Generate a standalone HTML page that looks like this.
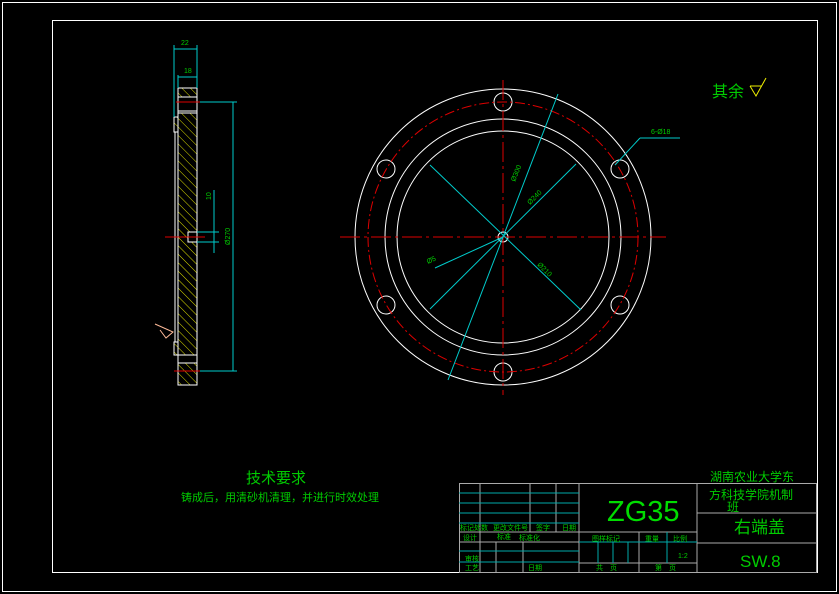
<!DOCTYPE html>
<html><head><meta charset="utf-8"><style>
html,body{margin:0;padding:0;background:#000;width:839px;height:594px;overflow:hidden}
svg{display:block}
text{font-family:"Liberation Sans","Noto Sans CJK SC",sans-serif}
</style></head><body>
<svg width="839" height="594" viewBox="0 0 839 594">
<defs><pattern id="h" width="6" height="6" patternUnits="userSpaceOnUse" patternTransform="rotate(-45)"><line x1="0" y1="0" x2="0" y2="6" stroke="#dd0" stroke-width="1"/></pattern></defs>
<rect x="2.5" y="2.5" width="834" height="589" fill="none" stroke="#fff"/>
<rect x="52.5" y="20.5" width="765" height="552" fill="none" stroke="#fff"/>
<!-- side view -->
<g stroke="#fff" fill="none" stroke-width="1">
<rect x="178" y="113" width="19" height="242" fill="url(#h)"/>
<rect x="174" y="117" width="4" height="15" fill="url(#h)"/>
<rect x="174" y="342" width="4" height="13" fill="url(#h)"/>
<rect x="178" y="88" width="19" height="9" fill="url(#h)"/>
<rect x="178" y="363" width="19" height="22" fill="url(#h)"/>
<line x1="174" y1="45" x2="174" y2="117"/>
<line x1="175" y1="132" x2="175" y2="342"/>
<line x1="178" y1="97" x2="178" y2="113"/>
<line x1="178" y1="97" x2="197" y2="97"/>
<line x1="178" y1="111" x2="197" y2="111"/>
<line x1="178" y1="355" x2="178" y2="363"/>
<line x1="197" y1="88" x2="197" y2="385"/>
<rect x="188" y="232" width="9" height="10" fill="#000"/>
</g>
<g stroke="#0cc" stroke-width="1" fill="none">
<line x1="174" y1="45" x2="174" y2="117"/><line x1="197" y1="45" x2="197" y2="88"/>
<line x1="174" y1="49" x2="197" y2="49"/>
<line x1="178" y1="75" x2="178" y2="88"/><line x1="178" y1="77" x2="197" y2="77"/>
<line x1="197" y1="102" x2="237" y2="102"/><line x1="197" y1="371" x2="237" y2="371"/>
<line x1="233" y1="102" x2="233" y2="371"/>
<line x1="214" y1="190" x2="214" y2="253"/>
<line x1="197" y1="232" x2="219" y2="232"/><line x1="197" y1="242" x2="219" y2="242"/>
</g>
<g stroke="#d00" stroke-width="1"><line x1="165" y1="237" x2="205" y2="237"/><line x1="176" y1="102" x2="200" y2="102"/><line x1="174" y1="371" x2="200" y2="371"/></g>
<polyline points="155,324 173,332 166,338 160,330" fill="none" stroke="#fb9"/>
<g fill="#0c0" font-size="7">
<text x="181" y="45">22</text><text x="184" y="73">18</text>
<text x="211" y="200" transform="rotate(-90 211 200)">10</text>
<text x="230" y="245" transform="rotate(-90 230 245)">Ø270</text>
</g>
<!-- front view -->
<g fill="none" stroke="#fff">
<circle cx="503" cy="237" r="148"/>
<circle cx="503" cy="237" r="118"/>
<circle cx="503" cy="237" r="106"/>
<circle cx="503" cy="237" r="5"/>
<circle cx="503" cy="102" r="9"/><circle cx="620" cy="169" r="9"/><circle cx="620" cy="305" r="9"/>
<circle cx="503" cy="372" r="9"/><circle cx="386" cy="305" r="9"/><circle cx="386" cy="169" r="9"/>
</g>
<circle cx="503" cy="237" r="135" fill="none" stroke="#d00" stroke-dasharray="10,3,2,3"/>
<g stroke="#d00"><line x1="340" y1="237" x2="666" y2="237" stroke-dasharray="20,4,3,4"/><line x1="503" y1="80" x2="503" y2="395" stroke-dasharray="20,4,3,4"/></g>
<g stroke="#0cc" fill="none">
<line x1="448" y1="380" x2="558" y2="94"/>
<line x1="430" y1="165" x2="581" y2="310"/>
<line x1="576" y1="164" x2="430" y2="309"/>
<line x1="435" y1="268" x2="503" y2="237"/>
<line x1="615" y1="165" x2="640" y2="138"/><line x1="640" y1="138" x2="680" y2="138"/>
</g>
<g fill="#0c0" font-size="7">
<text x="515" y="182" transform="rotate(-68 515 182)">Ø300</text>
<text x="530" y="205" transform="rotate(-45 530 205)">Ø240</text>
<text x="537" y="265" transform="rotate(45 537 265)">Ø210</text>
<text x="428" y="264" transform="rotate(-25 428 264)">Ø5</text>
<text x="651" y="134">6-Ø18</text>
</g>
<text x="712" y="97" fill="#0c0" font-size="16">其余</text>
<polyline points="750,86 756,96 766,78" fill="none" stroke="#ee0"/>
<line x1="750" y1="86" x2="762" y2="86" stroke="#ee0"/>
<!-- tech reqs -->
<text x="246" y="483" fill="#0c0" font-size="15">技术要求</text>
<text x="181" y="501" fill="#0c0" font-size="11">铸成后，用清砂机清理，并进行时效处理</text>
<!-- title block -->
<g stroke="#aaa" fill="none">
<rect x="459.5" y="483.5" width="357" height="89"/>
<line x1="459" y1="532" x2="579" y2="532"/>
<line x1="579" y1="483" x2="579" y2="572"/>
<line x1="697" y1="483" x2="697" y2="572"/>
<line x1="697" y1="513" x2="817" y2="513"/>
<line x1="697" y1="543" x2="817" y2="543"/>
<line x1="579" y1="532" x2="697" y2="532"/>
<line x1="579" y1="563" x2="697" y2="563"/>
<line x1="639" y1="532" x2="639" y2="572"/>
<line x1="459" y1="542" x2="579" y2="542"/>
<line x1="480" y1="483" x2="480" y2="572"/>
<line x1="496" y1="542" x2="496" y2="572"/>
<line x1="523" y1="542" x2="523" y2="572"/>
<line x1="530" y1="483" x2="530" y2="532"/>
<line x1="556" y1="483" x2="556" y2="532"/>
</g>
<g stroke="#0aa" fill="none">
<line x1="459" y1="493" x2="579" y2="493"/><line x1="459" y1="503" x2="579" y2="503"/><line x1="459" y1="513" x2="579" y2="513"/><line x1="459" y1="523" x2="579" y2="523"/>
<line x1="459" y1="551" x2="579" y2="551"/><line x1="459" y1="562" x2="579" y2="562"/>
<line x1="579" y1="542" x2="697" y2="542"/><line x1="667" y1="532" x2="667" y2="563"/><line x1="598" y1="542" x2="598" y2="563"/><line x1="613" y1="542" x2="613" y2="563"/><line x1="628" y1="542" x2="628" y2="563"/>
</g>
<g fill="#0c0" font-size="7">
<text x="460" y="530">标记处数</text><text x="493" y="530">更改文件号</text><text x="536" y="530">签字</text><text x="562" y="530">日期</text>
<text x="463" y="540">设计</text><text x="497" y="539">标准</text><text x="519" y="540">标准化</text>
<text x="465" y="561">审核</text><text x="465" y="570">工艺</text><text x="528" y="570">日期</text>
<text x="592" y="541">图样标记</text><text x="645" y="541">重量</text><text x="673" y="541">比例</text>
<text x="678" y="558">1:2</text><text x="596" y="570">共　页</text><text x="655" y="570">第　页</text>
</g>
<text x="607" y="521" fill="#0d0" font-size="29">ZG35</text>
<text x="710" y="481" fill="#0c0" font-size="12">湖南农业大学东</text>
<text x="709" y="499" fill="#0c0" font-size="12">方科技学院机制</text>
<text x="727" y="511" fill="#0c0" font-size="12">班</text>
<text x="734" y="533" fill="#0c0" font-size="17">右端盖</text>
<text x="740" y="567" fill="#0c0" font-size="17">SW.8</text>
</svg>
</body></html>
